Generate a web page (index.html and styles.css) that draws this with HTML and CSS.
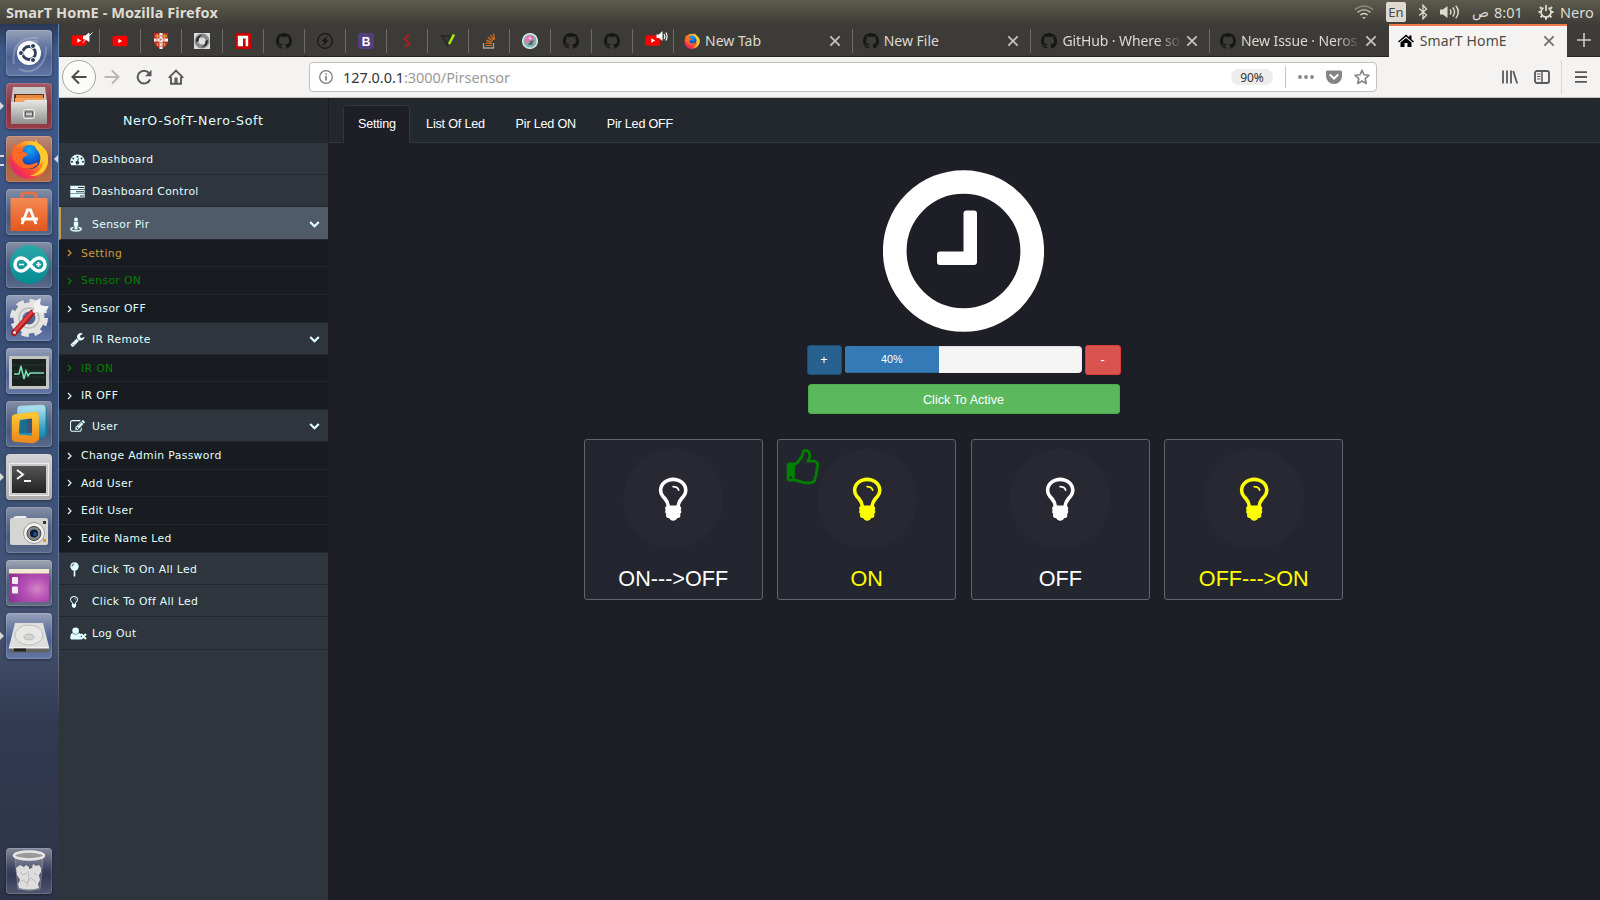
FILE: index.html
```html
<!DOCTYPE html>
<html lang="en">
<head>
<meta charset="utf-8">
<title>SmarT HomE</title>
<link rel="stylesheet" href="styles.css">
</head>
<body>
<svg class="defs" width="0" height="0" aria-hidden="true">
  <defs>
    <linearGradient id="steel" x1="0" y1="0" x2="0" y2="1"><stop offset="0" stop-color="#e8e8e6"/><stop offset="1" stop-color="#8f8f8d"/></linearGradient>
    <linearGradient id="fox" x1="1" y1="0" x2="0" y2="1"><stop offset="0" stop-color="#fff44f"/><stop offset=".38" stop-color="#ff9a1e"/><stop offset=".68" stop-color="#ff3b3f"/><stop offset="1" stop-color="#d0119a"/></linearGradient>
    <radialGradient id="globe" cx=".5" cy=".2" r=".8"><stop offset="0" stop-color="#15a8f5"/><stop offset=".6" stop-color="#0b5bd0"/><stop offset="1" stop-color="#1b2d80"/></radialGradient>
    <linearGradient id="bag" x1="0" y1="0" x2="0" y2="1"><stop offset="0" stop-color="#f58a55"/><stop offset="1" stop-color="#e2571e"/></linearGradient>
    <linearGradient id="teal" x1="0" y1="0" x2="0" y2="1"><stop offset="0" stop-color="#2ba9aa"/><stop offset="1" stop-color="#048a92"/></linearGradient>
    <linearGradient id="sky" x1="0" y1="0" x2="0" y2="1"><stop offset="0" stop-color="#a5dceb"/><stop offset="1" stop-color="#1b8fb8"/></linearGradient>
    <linearGradient id="gold" x1="0" y1="0" x2="0" y2="1"><stop offset="0" stop-color="#fcc433"/><stop offset="1" stop-color="#ee8d1b"/></linearGradient>
    <radialGradient id="violet" cx=".7" cy=".6" r=".8"><stop offset="0" stop-color="#d585c6"/><stop offset=".4" stop-color="#b551b4"/><stop offset="1" stop-color="#8d2f92"/></radialGradient>
    <linearGradient id="dark" x1="0" y1="0" x2="0" y2="1"><stop offset="0" stop-color="#555"/><stop offset="1" stop-color="#222"/></linearGradient>
  </defs>
  <symbol id="github" viewBox="0 0 16 16"><path fill="#171717" d="M8 0C3.58 0 0 3.58 0 8c0 3.54 2.29 6.53 5.47 7.59.4.07.55-.17.55-.38 0-.19-.01-.82-.01-1.49-2.01.37-2.53-.49-2.69-.94-.09-.23-.48-.94-.82-1.13-.28-.15-.68-.52-.01-.53.63-.01 1.08.58 1.23.82.72 1.21 1.87.87 2.33.66.07-.52.28-.87.51-1.07-1.78-.2-3.64-.89-3.64-3.95 0-.87.31-1.59.82-2.15-.08-.2-.36-1.02.08-2.12 0 0 .67-.21 2.2.82.64-.18 1.32-.27 2-.27.68 0 1.36.09 2 .27 1.53-1.04 2.2-.82 2.2-.82.44 1.1.16 1.92.08 2.12.51.56.82 1.27.82 2.15 0 3.07-1.87 3.75-3.65 3.95.29.25.54.73.54 1.48 0 1.07-.01 1.93-.01 2.2 0 .21.15.46.55.38A8.013 8.013 0 0016 8c0-4.42-3.58-8-8-8z"/></symbol>
  <symbol id="youtube" viewBox="0 0 16 16"><rect x=".5" y="2.7" width="15" height="10.6" rx="2.4" fill="#f00"/><path d="M6.3 5.8v4.4L10.2 8z" fill="#fff"/></symbol>
  <symbol id="firefox" viewBox="0 0 40 40"><circle cx="20" cy="21" r="19" fill="url(#fox)"/><circle cx="20.5" cy="18" r="12" fill="url(#globe)"/><path d="M4 10c0-2 1-4 1.500-5 1 2 2 3 4 4 2-1.500 5-2 7-1.500-2 1.500-3 3-3 5l5 2c0 2-2 3-4 4-2 2-1 6 3 7 4 1 7-1 10-2 2 0 2 2 0 3-4 4-13 5-19-1C3 21 2 16 4 10z" fill="#ff6b25"/><path d="M27 0c-2 6-1 9 2 12 3 4 3 9 1 13 3-1 4-3 4.500-4 0 8-6 14-14 16C32 38 40 30 39 19c0-5-2-8-3-9 0 2-1 3-1 3C34 8 28 6 27 0z" fill="#ffc92e"/></symbol>
  <symbol id="close" viewBox="0 0 12 12"><path d="M1.300 1.300l9.400 9.400M10.700 1.300l-9.400 9.400" fill="none" stroke="currentColor" stroke-width="1.700"/></symbol>
  <symbol id="chevron" viewBox="0 0 1792 1792"><path fill="currentColor" d="M1683 808l-742 741q-19 19-45 19t-45-19l-742-741q-19-19-19-45.500t19-45.500l166-165q19-19 45-19t45 19l531 531 531-531q19-19 45-19t45 19l166 165q19 19 19 45.500t-19 45.500z"/></symbol>
  <symbol id="angle" viewBox="0 0 6 8"><path d="M1 1L4 4 1 7" fill="none" stroke="currentColor" stroke-width="1.200"/></symbol>
  <symbol id="bulb" viewBox="0 0 1792 1792"><path fill="currentColor" d="M1120 576q0 13-9.500 22.500t-22.500 9.500-22.500-9.500-9.500-22.500q0-46-54-71t-106-25q-13 0-22.500-9.500t-9.500-22.500 9.500-22.500 22.500-9.500q50 0 99.500 16t87 54 37.500 90zm160 0q0-72-34.500-134t-90-101.500-123-62-136.500-22.500-136.500 22.500-123 62-90 101.500-34.500 134q0 101 68 180 10 11 30.500 33t30.500 33q128 153 141 298h228q13-145 141-298 10-11 30.500-33t30.500-33q68-79 68-180zm128 0q0 155-103 268-45 49-74.500 87t-59.500 95.500-34 107.500q47 28 47 82 0 37-25 64 25 27 25 64 0 52-45 81 13 23 13 47 0 46-31.500 71t-77.500 25q-20 44-60 70t-87 26-87-26-60-70q-46 0-77.500-25t-31.500-71q0-24 13-47-45-29-45-81 0-37 25-64-25-27-25-64 0-54 47-82-4-50-34-107.500t-59.500-95.500-74.500-87q-103-113-103-268 0-99 44.500-184.500t117-142 164-89 186.500-32.500 186.500 32.500 164 89 117 142 44.500 184.500z"/></symbol>
</svg>

<header class="topbar">
  <span class="window-title">SmarT HomE - Mozilla Firefox</span>
  <div class="indicators">
    <svg class="ind-wifi" viewBox="0 0 20 14" fill="none" stroke-width="1.500"><path d="M.8 4.600Q10-2.600 19.200 4.600" stroke="#8b8880"/><path d="M3.600 7.400Q10 2 16.400 7.400" stroke="#b5b2a9"/><path d="M6.400 10Q10 7 13.600 10" stroke="#dfdbd2"/><path d="M8 12.200h4L10 14z" fill="#dfdbd2"/></svg>
    <span class="ind-lang">En</span>
    <svg class="ind-bt" viewBox="0 0 10 16" fill="none" stroke="#dfdbd2" stroke-width="1.300"><path d="M1.200 4.500L8.500 11 5 14.800V1.200L8.500 5 1.200 11.500"/></svg>
    <svg class="ind-vol" viewBox="0 0 20 14"><path d="M0 4.500h3L7.500 1v12L3 9.500H0z" fill="#dfdbd2"/><path d="M10 4.500q2 2.500 0 5M12.800 2.500q3.500 4.500 0 9M15.800.8q5 6.200 0 12.400" fill="none" stroke="#dfdbd2" stroke-width="1.400"/></svg>
    <span class="ind-ar">ص</span>
    <span class="ind-time">8:01</span>
    <svg class="ind-gear" viewBox="0 0 16 16" fill="none" stroke="#dfdbd2"><path d="M5.500 3.800A5 5 0 1010.500 3.800" stroke-width="1.700"/><path d="M8 1v6" stroke-width="1.700"/><path d="M3.500 4.700L2 3M12.500 4.700L14 3M3 8H.5M13 8h2.500M4.300 11.700L2.600 13.400M11.700 11.700l1.700 1.700M8 13.200v2.500" stroke-width="2"/></svg>
    <span class="ind-user">Nero</span>
  </div>
</header>

<div class="desktop">
  <nav class="dock">
    <div class="tile t-blue"><svg viewBox="0 0 46 46"><g fill="none" stroke="#b9c3da" stroke-opacity=".4" stroke-width="2"><path d="M8 34C5 16 16 6 32 8M13 39c14 7 28-4 27-22M12 24C12 14 22 8 32 12"/></g><circle cx="23" cy="23" r="12" fill="#fff"/><circle cx="23" cy="23" r="6.500" fill="none" stroke="#303c5c" stroke-width="2.800"/><g fill="#303c5c" stroke="#fff"><circle cx="15" cy="23" r="2.500"/><circle cx="27" cy="16" r="2.500"/><circle cx="27" cy="30" r="2.500"/></g></svg></div>
    <div class="tile t-red mark"><svg viewBox="0 0 46 46"><path d="M7 4h32l2 16v21H5V20z" fill="#c9c9c7"/><path d="M8 11h30v9H8z" fill="#5a3526"/><path d="M10 12h27v3H10z" fill="#e9873e"/><path d="M9 15h29v5H9z" fill="#f5a35c"/><path d="M5 19h12l3-2h21v24H5z" fill="url(#steel)"/><rect x="17.500" y="26.500" width="11" height="9" rx="2" fill="#a5a5a3" stroke="#eee"/><rect x="19.500" y="29" width="7" height="4" fill="#ccc" stroke="#555"/></svg></div>
    <div class="tile t-orange mark two active"><svg viewBox="0 0 46 46"><use href="#firefox" x="3" y="3" width="40" height="40"/></svg></div>
    <div class="tile t-slate"><svg viewBox="0 0 46 46"><path d="M16 13V7q0-3 3-3h8q3 0 3 3v6" fill="none" stroke="#e2714a" stroke-width="3"/><path d="M4.500 9h37v33h-37z" fill="url(#bag)"/><path d="M16 35l5.500-14h3L30 35M15 30h17" fill="none" stroke="#fff" stroke-width="2.800"/></svg></div>
    <div class="tile t-slate"><svg viewBox="0 0 46 46"><circle cx="23.500" cy="22.500" r="19.500" fill="url(#teal)"/><g fill="none" stroke="#fff" stroke-width="3.500"><path d="M24 22.500c-4-6-7-6.500-9-6.500a6 6.500 0 000 13c3 0 5-1 9-6.500s6-6.500 9-6.500a6 6.500 0 010 13c-3 0-5-1-9-6.500z"/></g><path d="M13 22.500h5M30 22.500h5M32.500 20v5" stroke="#fff" stroke-width="1.600"/></svg></div>
    <div class="tile t-blue"><svg viewBox="0 0 46 46"><circle cx="23" cy="23" r="16.500" fill="none" stroke="#e3e3e1" stroke-width="5" stroke-dasharray="7.400 5.560"/><circle cx="23" cy="23" r="11" fill="none" stroke="#e3e3e1" stroke-width="9"/><circle cx="23" cy="23" r="10" fill="none" stroke="#bdbdbb" stroke-width="1.500"/><path d="M8 38L26 18" stroke="#a9181c" stroke-width="6" stroke-linecap="round"/><path d="M9 36L26 17" stroke="#dc4246" stroke-width="3"/><path d="M27 17l6-4M33 5.500c-4 2-5 6-2 9s8 2 9.500-2l-5 0-3-3z" fill="#f2f2f0" stroke="#f2f2f0" stroke-width="3"/><circle cx="8.500" cy="37.500" r="1.500" fill="#eee"/></svg></div>
    <div class="tile t-blue"><svg viewBox="0 0 46 46"><rect x="3" y="8" width="40" height="33" rx="1" fill="#c4c4c1"/><rect x="6" y="11" width="34" height="27" fill="#18231f"/><path d="M6 17h34M6 23h34M6 29h34" stroke="#2b3733"/><path d="M8 26h5l2-8 3 13 2-8 2 5 2-3h14" fill="none" stroke="#7ce0b8" stroke-width="1.500"/></svg></div>
    <div class="tile t-slate"><svg viewBox="0 0 46 46"><path d="M14 8.500L36 7l.5 24-3.500 3H13z" fill="none" stroke="#177a9f" stroke-width="7" stroke-linejoin="round" transform="translate(1 1)"/><path d="M15 8.500L36 7.500 35.500 32 14 33z" fill="none" stroke="url(#sky)" stroke-width="7.500" stroke-linejoin="round"/><path d="M9.500 17L29 14.500l.5 22.500-3 1.500L9.500 37z" fill="none" stroke="url(#gold)" stroke-width="7.500" stroke-linejoin="round"/><path d="M14 19l7-1v14h-8z" fill="#1a6f91"/><path d="M21 18l5-.5V32h-5z" fill="#3c5478"/></svg></div>
    <div class="tile t-silver mark"><svg viewBox="0 0 46 46"><rect x="3" y="9" width="40" height="33" rx="1" fill="#c9c9c7"/><rect x="3.500" y="9.500" width="39" height="32" fill="none" stroke="#eee"/><rect x="6" y="12" width="34" height="27" fill="url(#dark)"/><path d="M11 16l6 4.500-6 4.500M18 27h7" fill="none" stroke="#f4f4f2" stroke-width="2"/></svg></div>
    <div class="tile t-slate"><svg viewBox="0 0 46 46"><path d="M7 12q0-3 5-3h8l1 3z" fill="#eee"/><rect x="4" y="11" width="38" height="27" rx="2" fill="#d5d5d3"/><circle cx="28" cy="26" r="10.500" fill="#f1f1ef" stroke="#9b9b99"/><circle cx="28" cy="26.500" r="7" fill="#888" stroke="#444"/><circle cx="28" cy="26.500" r="4" fill="#0a1c38"/><circle cx="29" cy="27" r="2" fill="#234e87"/><rect x="37" y="14" width="3" height="3" fill="#333"/><rect x="37" y="32" width="3" height="3" fill="#f0921e"/></svg></div>
    <div class="tile t-gray"><svg viewBox="0 0 46 46"><rect x="3" y="9" width="40" height="33" rx="2" fill="url(#violet)"/><path d="M3 9h40v4.500H3z" fill="#f0ebd3"/><rect x="6" y="17" width="6" height="7" rx="1" fill="#f5e9f3"/><rect x="6" y="26.500" width="6" height="7" rx="1" fill="#f5e9f3"/></svg></div>
    <div class="tile t-blue mark"><svg viewBox="0 0 46 46"><path d="M9 10h28l6 24H3z" fill="#dededc"/><path d="M3 34h40v5.500H3z" fill="#646462"/><path d="M3 34h40v1.500H3z" fill="#f1f1ef"/><path d="M8 37h12" stroke="#222" stroke-width="3"/><ellipse cx="23" cy="22" rx="14" ry="10" fill="#e7e7e5" stroke="#bfbfbd"/><ellipse cx="23" cy="24" rx="5" ry="3" fill="#d3d3d1" stroke="#bbb"/></svg></div>
    <div class="tile t-trash"><svg viewBox="0 0 46 46"><path d="M9 10l3 31q11 3 22 0l3-31z" fill="#fff" fill-opacity=".14" stroke="#bbb" stroke-opacity=".4"/><path d="M10 20l4-3 4 2 2-2 3 2v2l3-1 1-4 3 2 3-1 2 3v4l-2 3 1 5-2 4 1 4q-10 3-20 0l-1-4 2-4-3-5z" fill="#dcdddc"/><path d="M14 24l3 3 4-2M27 25l4 2M14 35l3-3 4 3 4-5 5 4M22 23l1 6-2 9" fill="none" stroke="#b8babb"/><ellipse cx="23" cy="7.500" rx="15" ry="4" fill="#9a9a9c" stroke="#e6e6e2" stroke-width="2.500"/></svg></div>
  </nav>

  <div class="browser">
    <div class="tabstrip">
      <div class="pin"><svg viewBox="0 0 24 18"><use href="#youtube" x="1" y="1.500" width="16" height="16"/><path d="M13.500 5h2l3.500-3v8.500l-3.500-2.500h-2zM12.500 12L22.500 1.500" fill="#fff" stroke="#fff" stroke-width=".9"/></svg></div>
      <div class="pin solo"><svg viewBox="0 0 16 16"><use href="#youtube"/></svg></div>
      <div class="pin solo"><svg viewBox="0 0 16 16"><path d="M1 0h14v10q-2 4-7 6-5-2-7-6z" fill="#c22a25"/><path d="M8 0v16M1 7h14" stroke="#f3eee2" stroke-width="3"/><path d="M4.500 1v4M11.500 1v4M4.500 10v3M11.500 10v3M2 3h4M10 3h4" stroke="#d99b35" stroke-width="1.500"/><path d="M8 2v12M3 7h10" stroke="#b33" stroke-dasharray="1.500 2"/></svg></div>
      <div class="pin solo"><svg viewBox="0 0 16 16"><path d="M0 0h16v16H0z" fill="#dcdcdc"/><circle cx="8" cy="8" r="5.500" fill="none" stroke="#8a8a8a" stroke-width="4"/><path d="M2 9Q2 2 9 1.500Q4 4 4.500 8zM14 7q0 7-7 7.500Q12 12 11.500 8z" fill="#222"/><circle cx="8" cy="8" r="3" fill="#dedede"/></svg></div>
      <div class="pin solo"><svg viewBox="0 0 16 16"><path d="M0 0h16v16H0z" fill="#c00"/><path d="M2.800 2.800h10.400v10.400h-2.600V5.600H8v7.600H2.800z" fill="#fff"/></svg></div>
      <div class="pin solo"><svg><use href="#github"/></svg></div>
      <div class="pin solo"><svg viewBox="0 0 16 16"><circle cx="8" cy="8" r="7.300" fill="none" stroke="#151515" stroke-width="1.200"/><path d="M10.500 3L4.500 8.300l3 .3L5.500 13l6-5.500-3-.3z" fill="#151515"/></svg></div>
      <div class="pin solo"><svg viewBox="0 0 16 16"><rect width="16" height="16" rx="2" fill="#563d7c"/><text x="8" y="12.500" class="glyph-b">B</text></svg></div>
      <div class="pin solo"><svg viewBox="0 0 16 16"><path d="M10 1.500L5.500 6l5 4.500L6 14" fill="none" stroke="#b01f1b" stroke-width="1.800"/></svg></div>
      <div class="pin solo"><svg viewBox="0 0 16 16"><path d="M0 2h11L7.500 14.500z" fill="#2a2b28"/><path d="M4 4h5l-2 5z" fill="#3d3b37"/><path d="M14 1.500L9 11" stroke="#a5e810" stroke-width="2.600"/></svg></div>
      <div class="pin solo"><svg viewBox="0 0 16 16"><path d="M2.500 10v5h10v-5" fill="none" stroke="#a2a3a1" stroke-width="1.300"/><path d="M4.500 12.500h6M4.700 9.900l6 .8M5.200 7.200l5.700 1.900M6.700 4.300l5 3.400M9.300 2l3.700 4.800M12.500.5l1 5.800" stroke="#e2731d" stroke-width="1.200"/></svg></div>
      <div class="pin solo"><svg viewBox="0 0 16 16"><circle cx="8" cy="8" r="7.300" fill="#7bb5b0" stroke="#dce8e6" stroke-width="1.500"/><path d="M4 4q4-3 8 0l-2 5-4-1-2 3q-2-4 0-7z" fill="#ee6fae"/><path d="M8 8l4-1-2 5-4 0z" fill="#61676c"/><path d="M6 5l3-1v3z" fill="#fbd6e6"/></svg></div>
      <div class="pin solo"><svg><use href="#github"/></svg></div>
      <div class="pin solo"><svg><use href="#github"/></svg></div>
      <div class="pin"><svg viewBox="0 0 24 18"><use href="#youtube" x="1" y="1.500" width="16" height="16"/><path d="M12.500 3.500h2.500l3.500-3.500v10L15 7h-2.500z" fill="#fff"/><path d="M20 3q1.500 2.500 0 5M22 1.500q2 4 0 8" fill="none" stroke="#fff" stroke-width="1.200"/></svg></div>
      <div class="tab"><svg class="fav"><use href="#firefox"/></svg><span>New Tab</span><svg class="x"><use href="#close"/></svg></div>
      <div class="tab"><svg class="fav"><use href="#github"/></svg><span>New File</span><svg class="x"><use href="#close"/></svg></div>
      <div class="tab"><svg class="fav"><use href="#github"/></svg><span class="fade">GitHub · Where so</span><svg class="x"><use href="#close"/></svg></div>
      <div class="tab last"><svg class="fav"><use href="#github"/></svg><span class="fade">New Issue · Neros</span><svg class="x"><use href="#close"/></svg></div>
      <div class="tab current"><svg class="fav" viewBox="0 0 16 16"><path d="M8 1.500L0 8.500l1 1L8 3.600l7 5.900 1-1-2.500-2.200V2.500h-2.300v1.800zM2.500 9.600V14h4v-4h3v4h4V9.600L8 5z"/></svg><span>SmarT HomE</span><svg class="x"><use href="#close"/></svg></div>
      <div class="newtab"><svg viewBox="0 0 14 14"><path d="M7 0v14M0 7h14" stroke="#cfccc4" stroke-width="1.600"/></svg></div>
    </div>

    <div class="toolbar">
      <div class="back"><svg viewBox="0 0 16 16"><path d="M15.500 8H1.500M8 1.500L1.500 8 8 14.500" fill="none" stroke="#4c4c4c" stroke-width="2"/></svg></div>
      <svg class="nav-i" viewBox="0 0 16 16"><path d="M.5 8h14M8 1.500L14.500 8 8 14.500" fill="none" stroke="#b8b7b5" stroke-width="2"/></svg>
      <svg class="nav-i" viewBox="0 0 16 16"><path d="M14 10.500A6.400 6.400 0 1113 4" fill="none" stroke="#585858" stroke-width="2"/><path d="M15.500.8v6.400H9z" fill="#585858"/></svg>
      <svg class="nav-i" viewBox="0 0 16 16"><path d="M.8 8.800L8 1.500l7.200 7.300M3 8v6.800h10V8" fill="none" stroke="#585858" stroke-width="1.900"/><path d="M6.500 8.500h3V15h-3z" fill="#585858"/></svg>
      <div class="urlbar">
        <svg class="info" viewBox="0 0 14 14"><circle cx="7" cy="7" r="6.300" fill="none" stroke="#777" stroke-width="1.200"/><path d="M7 6v4.500M7 3.300v1.500" stroke="#777" stroke-width="1.600"/></svg>
        <span class="url">127.0.0.1<i>:3000/Pirsensor</i></span>
        <span class="zoom">90%</span>
        <span class="url-sep"></span>
        <svg class="dots" viewBox="0 0 16 4" fill="#858585"><circle cx="2" cy="2" r="1.900"/><circle cx="8" cy="2" r="1.900"/><circle cx="14" cy="2" r="1.900"/></svg>
        <svg class="pocket" viewBox="0 0 16 15"><path d="M1.500.5h13q1.500 0 1.500 1.500v4a8 8 0 01-16 0V2Q0 .5 1.500.5z" fill="#858585"/><path d="M4.300 5L8 8.500 11.700 5" fill="none" stroke="#fff" stroke-width="2" stroke-linecap="round"/></svg>
        <svg class="star" viewBox="0 0 16 16"><path d="M8 1.300l2 4.500 4.900.5-3.700 3.300 1.100 4.900L8 12l-4.300 2.500 1.100-4.900L1.100 6.300 6 5.800z" fill="none" stroke="#858585" stroke-width="1.600" stroke-linejoin="round"/></svg>
      </div>
      <svg class="lib" viewBox="0 0 16 14" fill="none" stroke="#5a5a5a" stroke-width="1.800"><path d="M1 .5v13M5 .5v13M9 .5v13M11.200 1l4 12.500"/></svg>
      <svg class="side" viewBox="0 0 16 14"><rect x="1" y="1" width="14" height="12" rx="2" fill="none" stroke="#5a5a5a" stroke-width="1.900"/><path d="M8 1v12" stroke="#5a5a5a" stroke-width="1.500"/><path d="M3 4h3.500M3 6.500h3.500M3 9h3.500" stroke="#5a5a5a"/></svg>
      <span class="tool-sep"></span>
      <svg class="menu-i" viewBox="0 0 12 12"><path d="M0 1.200h12M0 6h12M0 10.800h12" stroke="#5a5a5a" stroke-width="1.800"/></svg>
    </div>

    <div class="page">
      <aside class="sidebar">
        <div class="brand">NerO-SofT-Nero-Soft</div>
        <a class="item"><svg viewBox="0 0 15 15"><path fill-rule="evenodd" d="M7.500 2.500A7.200 7.200 0 00.3 9.700q0 2 1 3.600h12.400q1-1.600 1-3.600a7.200 7.200 0 00-7.200-7.200zM3.300 5.500a1 1 0 110 2 1 1 0 010-2zm4.200-1.800a1 1 0 110 2 1 1 0 010-2zM2 8.800a1 1 0 110 2 1 1 0 010-2zm11 0a1 1 0 110 2 1 1 0 010-2zm-1.500-3.300a1 1 0 110 2 1 1 0 010-2zM8 6.200l.9.200-.7 2.800a1.700 1.700 0 11-1-.2z"/></svg>Dashboard</a>
        <a class="item"><svg viewBox="0 0 15 15"><path fill-rule="evenodd" d="M.3 1.700h14.400v3.500H.3zM8 3v1h6V3zM.3 5.900h14.400v3.500H.3zM6 7.200v1h8v-1zM.3 10.100h14.400v3.500H.3zM10 11.400v1h4v-1z"/></svg>Dashboard Control</a>
        <a class="item open tall"><svg class="narrow" viewBox="0 0 12 15"><circle cx="6" cy="2.500" r="1.900"/><path d="M3.800 4.800h4.400v4.200H7.500v3.500h-3V9h-.7z"/><path d="M3.500 10.500C-1.500 11.500.8 14 6 14s7.500-2.500 2.500-3.500" fill="none" stroke="currentColor" stroke-width="1.300"/></svg>Sensor Pir<svg class="chev"><use href="#chevron"/></svg></a>
        <a class="sub amber low"><svg><use href="#angle"/></svg>Setting</a>
        <a class="sub green"><svg><use href="#angle"/></svg>Sensor ON</a>
        <a class="sub"><svg><use href="#angle"/></svg>Sensor OFF</a>
        <a class="item"><svg viewBox="0 0 1792 1792"><path d="M448 1472q0-26-19-45t-45-19-45 19-19 45 19 45 45 19 45-19 19-45zm644-420l-682 682q-37 37-90 37-52 0-91-37l-106-108q-38-36-38-90 0-53 38-91l681-681q39 98 114.500 173.500t173.500 114.500zm634-435q0 39-23 106-47 134-164.500 217.500t-258.500 83.500q-185 0-316.500-131.500t-131.500-316.500 131.500-316.500 316.500-131.500q58 0 121.500 16.500t107.500 46.500q16 11 16 28t-16 28l-293 169v224l193 107q5-3 79-48.500t135.500-81 70.500-35.500q15 0 23.500 10t8.500 25z"/></svg>IR Remote<svg class="chev"><use href="#chevron"/></svg></a>
        <a class="sub green low"><svg><use href="#angle"/></svg>IR ON</a>
        <a class="sub"><svg><use href="#angle"/></svg>IR OFF</a>
        <a class="item"><svg viewBox="0 0 1792 1792"><path d="M888 1184l116-116-152-152-116 116v56h96v96h56zm440-720q-16-16-33 1l-350 350q-17 17-1 33t33-1l350-350q17-17 1-33zm80 594v190q0 119-84.500 203.500t-203.500 84.500h-832q-119 0-203.500-84.500t-84.500-203.500v-832q0-119 84.500-203.500t203.500-84.500h832q63 0 117 25 15 7 18 23 3 17-9 29l-49 49q-14 14-32 8-23-6-45-6h-832q-66 0-113 47t-47 113v832q0 66 47 113t113 47h832q66 0 113-47t47-113v-126q0-13 9-22l64-64q15-15 35-7t20 29zm-96-738l288 288-672 672h-288v-288zm444 132l-92 92-288-288 92-92q28-28 68-28t68 28l152 152q28 28 28 68t-28 68z"/></svg>User<svg class="chev"><use href="#chevron"/></svg></a>
        <a class="sub"><svg><use href="#angle"/></svg>Change Admin Password</a>
        <a class="sub low"><svg><use href="#angle"/></svg>Add User</a>
        <a class="sub"><svg><use href="#angle"/></svg>Edit User</a>
        <a class="sub"><svg><use href="#angle"/></svg>Edite Name Led</a>
        <a class="item"><svg class="pinic" viewBox="0 0 9 15"><circle cx="4.500" cy="4.500" r="4.200"/><path d="M3.700 8.500h1.600v6H3.700z"/><path d="M2 4.500Q2 2 4.500 2" fill="none" stroke="#2f353d" stroke-width=".8"/></svg>Click To On All Led</a>
        <a class="item"><svg class="bulbic" viewBox="384 0 1024 1792"><use href="#bulb" width="1792" height="1792"/></svg>Click To Off All Led</a>
        <a class="item tall last-item"><svg class="wide" viewBox="0 0 17 15"><circle cx="5.600" cy="4.800" r="3.300"/><path d="M2.200 7q3.400 3 6.800 0l2.500 1.500-1 2 1.500 1.500-1.500 1.500H1.700Q0 13.500.2 11q.3-3.500 2-4z"/><path d="M11 8l5 5M16 8l-5 5" fill="none" stroke="currentColor" stroke-width="2"/></svg>Log Out</a>
      </aside>

      <main class="panel">
        <div class="panel-tabs">
          <a class="on">Setting</a><a>List Of Led</a><a>Pir Led ON</a><a>Pir Led OFF</a>
        </div>
        <section class="panel-body">
          <svg class="clock" viewBox="0 0 161 162"><ellipse cx="80.500" cy="81" rx="68.750" ry="69" fill="none" stroke="#fff" stroke-width="23.700"/><path d="M83.500 40.500h7.500q3 0 3 3V92q0 3-3 3H57q-3 0-3-3v-7.500q0-3 3-3h23.500v-38q0-3 3-3z" fill="#fff"/></svg>
          <div class="level">
            <button class="plus">+</button>
            <div class="progress"><div class="bar" style="width:40%">40%</div></div>
            <button class="minus">-</button>
          </div>
          <button class="activate">Click To Active</button>
          <div class="cards">
            <div class="card"><div class="disc"><svg><use href="#bulb"/></svg></div><p>ON---&gt;OFF</p></div>
            <div class="card lit"><svg class="thumb" viewBox="0 0 1792 1792"><path d="M384 1344q0-26-19-45t-45-19-45 19-19 45 19 45 45 19 45-19 19-45zm1152-576q0-51-39-89.500t-89-38.500h-352q0-58 48-159.500t48-160.500q0-98-32-145t-128-47q-26 26-38 85t-30.500 125.500-59.500 109.500q-22 23-77 91-4 5-23 30t-31.500 41-34.500 42.500-40 44-38.500 35.500-40 27-35.500 9h-32v640h32q13 0 31.500 3t33 6.500 38 11 35 11.500 35.500 12.500 29 10.500q211 73 342 73h121q192 0 192-167 0-26-5-56 30-16 47.500-52.500t17.500-73.500-18-69q53-50 53-119 0-25-10-55.500t-25-47.500q32-1 53.500-47t21.500-81zm128-1q0 89-49 163 9 33 9 69 0 77-38 144 3 21 3 43 0 101-60 178 1 139-85 219.500t-227 80.500h-129q-96 0-189.500-22.500t-216.500-65.500q-116-40-138-40h-288q-53 0-90.500-37.500t-37.500-90.500v-640q0-53 37.500-90.500t90.500-37.500h274q36-24 137-155 58-75 107-128 24-25 35.500-85.500t30.500-126.500 62-108q39-37 90-37 84 0 151 32.500t102 101.500 35 186q0 93-48 192h176q104 0 180 76t76 179z" fill="green"/></svg><div class="disc"><svg><use href="#bulb"/></svg></div><p>ON</p></div>
            <div class="card"><div class="disc"><svg><use href="#bulb"/></svg></div><p>OFF</p></div>
            <div class="card lit"><div class="disc"><svg><use href="#bulb"/></svg></div><p>OFF---&gt;ON</p></div>
          </div>
        </section>
      </main>
    </div>
  </div>
</div>
</body>
</html>
```

FILE: styles.css
```css
* { box-sizing: border-box; }
html, body { margin: 0; height: 900px; overflow: hidden; background: #1e1e27; }
body { font-family: "Noto Sans", "Open Sans", sans-serif; display: flex; flex-direction: column; }
.defs { position: absolute; }
svg { display: block; flex: none; }
button { font: inherit; margin: 0; padding: 0; }

/* desktop top bar */
.topbar { height: 24px; flex: none; display: flex; align-items: center; justify-content: space-between; padding: 0 7px 0 6px; background: linear-gradient(#5e5b4d, #3e3d38); color: #dfdbd2; }
.window-title { font-size: 14.500px; font-weight: 700; letter-spacing: .1px; line-height: 24px; white-space: nowrap; }
.indicators { display: flex; align-items: center; font-size: 14.500px; line-height: 22px; white-space: nowrap; }
.ind-wifi { width: 20px; height: 14px; margin-right: 12px; }
.ind-lang { width: 20px; height: 20px; border-radius: 2px; background: #dfdbd2; color: #4a4944; font-size: 13px; line-height: 20px; text-align: center; margin-right: 12px; }
.ind-bt { width: 10px; height: 16px; margin-right: 12px; }
.ind-vol { width: 20px; height: 14px; margin-right: 12px; }
.ind-ar { width: 17px; font-family: "DejaVu Sans", sans-serif; font-size: 14px; margin-right: 5px; }
.ind-time { width: 28px; margin-right: 16px; }
.ind-gear { width: 16px; height: 16px; margin-right: 6px; }
.ind-user { width: 33px; letter-spacing: 0; }

.desktop { display: flex; height: 876px; }

/* launcher */
.dock { width: 59px; flex: none; display: flex; flex-direction: column; align-items: center; gap: 7px; padding: 6px 1px 6px 0; border-right: 1px solid #5d7fb0; border-image: linear-gradient(#6888b8, #5b7db0 50%, #6a7080 72%, #33353c 80%) 1; background: linear-gradient(#2a3858, #3f5a89 3%, #3e5686 18%, #364b70 28%, #415379 60%, #434f6b 70%, #323a52 80%, #2e3448); }
.tile { position: relative; width: 46px; height: 46px; flex: none; border-radius: 4px; box-shadow: inset 0 0 0 1px rgba(255,255,255,.15), 0 1px 3px rgba(0,0,0,.4); }
.tile svg { width: 46px; height: 46px; }
.t-blue { background: linear-gradient(#97a0b9, #6578a2 35%, #4b6090 60%, #6478a7); }
.t-red { background: linear-gradient(#a35b69, #84353f 50%, #973b48); }
.t-orange { background: linear-gradient(#bd8a79, #a76043 50%, #b96b45); }
.t-slate { background: linear-gradient(#8590a6, #56688a 40%, #46597c 65%, #5a6b8c); }
.t-silver { background: linear-gradient(#d3d3d5, #a9a9ac); }
.t-gray { background: linear-gradient(#a0a6b4, #5a6680 40%, #4c5a76 65%, #626d85); }
.t-trash { background: linear-gradient(#85889a, #3c435e 45%, #333a55 60%, #51566e); margin-top: auto; }
.mark::before { content: ""; position: absolute; left: -6px; top: 19px; border: 4px solid transparent; border-left-color: #d9d9d9; border-right: 0; }
.two::before { top: 19px; width: 4px; height: 7px; border: solid #d9d9d9; border-width: 2px 0; }
.active::after { content: ""; position: absolute; right: -6px; top: 19px; border: 4px solid transparent; border-right-color: #d9d9d9; border-left: 0; }

/* browser chrome */
.browser { flex: 1; min-width: 0; display: flex; flex-direction: column; }
.tabstrip { height: 33px; flex: none; display: flex; background: #3d3b37; border-bottom: 1px solid #262522; }
.pin, .tab { position: relative; display: flex; align-items: center; height: 32px; padding-top: 2px; }
.pin { width: 41px; flex: none; padding-left: 11px; }
.pin svg { width: 24px; height: 18px; margin-top: -3px; }
.pin.solo { padding-left: 12px; }
.pin.solo svg { width: 16px; height: 16px; margin-top: 0; }
.pin::after, .tab::after { content: ""; position: absolute; right: 0; top: 5px; width: 1px; height: 24px; background: #6c6a64; }
.glyph-b { font: 700 12px "Liberation Sans", sans-serif; fill: #fff; text-anchor: middle; }
.tab { width: 178.700px; flex: none; padding-left: 10px; color: #dcd9d2; font-size: 14px; }
.tab .fav { width: 16px; height: 16px; margin-right: 5px; }
.tab span { flex: 1; min-width: 0; white-space: nowrap; overflow: hidden; line-height: 22px; }
.tab .fade { letter-spacing: -.1px; -webkit-mask-image: linear-gradient(90deg, #000 78%, transparent); mask-image: linear-gradient(90deg, #000 78%, transparent); }
.tab .x { width: 12px; height: 12px; margin: 0 12px 0 3px; color: #c9c6be; }
.tab.last::after, .tab.current::after { display: none; }
.tab.current { height: 33px; padding-bottom: 1px; background: #f4f3f1; color: #4c4b47; box-shadow: inset 0 2px 0 #f07746; letter-spacing: .15px; }
.tab.current .fav { fill: #000; margin-left: -1px; margin-right: 6px; }
.tab.current .x { color: #6d6c69; }
.newtab { flex: 1; display: flex; align-items: center; justify-content: center; }
.newtab svg { width: 14px; height: 14px; }

.toolbar { height: 41px; flex: none; display: flex; align-items: center; background: #f4f3f1; border-bottom: 1px solid #c5c2bf; padding: 0 13px 0 3px; }
.back { width: 34px; height: 34px; flex: none; border: 1px solid #a6a5a3; border-radius: 50%; background: #fbfbfa; display: flex; align-items: center; justify-content: center; margin-right: 8px; }
.back svg, .nav-i { width: 16px; height: 16px; }
.nav-i { margin-right: 16px; }
.urlbar { width: 1068px; height: 30px; flex: none; display: flex; align-items: center; margin-left: 109px; padding-left: 9px; border: 1px solid #c3c0bc; border-radius: 4px; background: #fff; }
.info { width: 14px; height: 14px; margin-right: 10px; }
.url { flex: 1; font-size: 14.500px; letter-spacing: -.05px; color: #333; line-height: 28px; }
.url i { font-style: normal; color: #999; }
.zoom { width: 42px; height: 16px; border-radius: 8px; background: #ededec; color: #333; font-size: 12px; line-height: 17px; text-align: center; margin-right: 12px; }
.url-sep { width: 1px; height: 22px; background: #c5c4c2; margin-right: 12px; }
.dots { width: 16px; height: 4px; margin-right: 12px; }
.pocket { width: 16px; height: 15px; margin-right: 12px; }
.star { width: 16px; height: 16px; margin-right: 6px; }
.lib { width: 16px; height: 14px; margin-left: 125px; }
.side { width: 16px; height: 14px; margin-left: 16px; }
.tool-sep { width: 1px; height: 34px; background: #d8d6d3; margin-left: 11px; }
.menu-i { width: 12px; height: 12px; margin-left: 13px; }

/* application */
.page { flex: 1; display: flex; min-height: 0; }
.sidebar { width: 269px; flex: none; display: flex; flex-direction: column; background: #2f353d; color: #e1ffff; font: 10.800px "DejaVu Sans", Verdana, sans-serif; letter-spacing: .36px; }
.brand { height: 45px; flex: none; line-height: 45px; padding-left: 64px; background: #23282e; font-size: 12.600px; letter-spacing: .67px; }
.item, .sub { position: relative; display: flex; align-items: center; flex: none; white-space: nowrap; color: #e1ffff; }
.item { height: 32px; padding: 2px 0 0 11px; border-bottom: 1px solid #23282e; letter-spacing: .33px; }
.item > svg:first-child { width: 15px; height: 15px; margin-right: 7px; fill: currentColor; }
.item > svg.narrow { width: 12px; margin-right: 10px; }
.item > svg.pinic { width: 9px; margin-right: 13px; }
.item > svg.bulbic { width: 8px; height: 14px; margin-right: 14px; }
.item > svg.wide { width: 17px; margin-right: 5px; }
.item .chev { width: 11px; height: 11px; margin: -2px 8px 0 auto; }
.tall { height: 33px; }
.last-item { padding-top: 0; }
.open { background: #4f5b69; padding-left: 9px; border-left: 2px solid #d19b3d; }
.sub { height: 28px; padding-left: 8px; background: #181c20; border-bottom: 1px solid #23282e; }
.sub svg { width: 6px; height: 8px; margin-right: 8px; }
.low { height: 27px; }
.amber { color: #d19b3d; }
.green { color: green; }

.panel { flex: 1; min-width: 0; height: 513px; background: #1e1e27; border-bottom: 1px solid #1b1b22; font-family: "Liberation Sans", Arial, sans-serif; font-size: 12.600px; color: #fff; }
.panel-tabs { height: 45px; display: flex; align-items: flex-end; gap: 1.800px; padding-left: 14px; background: #23282e; border-bottom: 1px solid #2f363e; border-left: 1px solid #1b1b22; border-radius: 3px 3px 0 0; letter-spacing: -.2px; }
.panel-tabs a { height: 38px; line-height: 36px; padding: 0 13.500px; border: 1px solid transparent; border-bottom: 0; border-radius: 4px 4px 0 0; margin-bottom: -1px; }
.panel-tabs .on { background: #1e1e27; border-color: #2f363e; padding: 0 13px 0 14px; }
.panel-body { display: flex; flex-direction: column; align-items: center; padding: 27px 1px 0 0; }
.clock { width: 161px; height: 162px; }
.level { display: flex; margin-top: 13px; height: 30px; }
.level button, .activate { color: #fff; border-radius: 3px; }
.plus { width: 35px; height: 30px; background: #286090; border: 1px solid #204d74; }
.minus { width: 36px; height: 30px; background: #d9534f; border: 1px solid #d43f3a; }
.progress { width: 237px; height: 27px; margin: 1px 3px 0 3px; border-radius: 4px; overflow: hidden; background: #f5f5f5; box-shadow: inset 0 1px 2px rgba(0,0,0,.1); }
.bar { height: 27px; background: #337ab7; box-shadow: inset 0 -1px 0 rgba(0,0,0,.15); font-size: 10.800px; line-height: 26px; text-align: center; }
.activate { width: 312px; height: 30px; margin-top: 9px; padding-top: 1px; background: #5cb85c; border: 1px solid #4cae4c; }
.cards { display: flex; gap: 14.500px; margin-top: 25px; }
.card { position: relative; width: 179px; height: 161px; border: 1px solid #61646b; border-radius: 3px; background: #23262e; display: flex; flex-direction: column; align-items: center; padding-top: 9px; }
.disc { width: 100px; height: 100px; border-radius: 50%; background: #282833; display: flex; align-items: center; justify-content: center; }
.disc svg { width: 50.400px; height: 50.400px; }
.card p { margin: 18px 0 0; font-size: 21.600px; line-height: 24px; }
.lit { color: #ff0; }
.thumb { position: absolute; left: 6px; top: 9px; width: 38px; height: 38px; }
```
